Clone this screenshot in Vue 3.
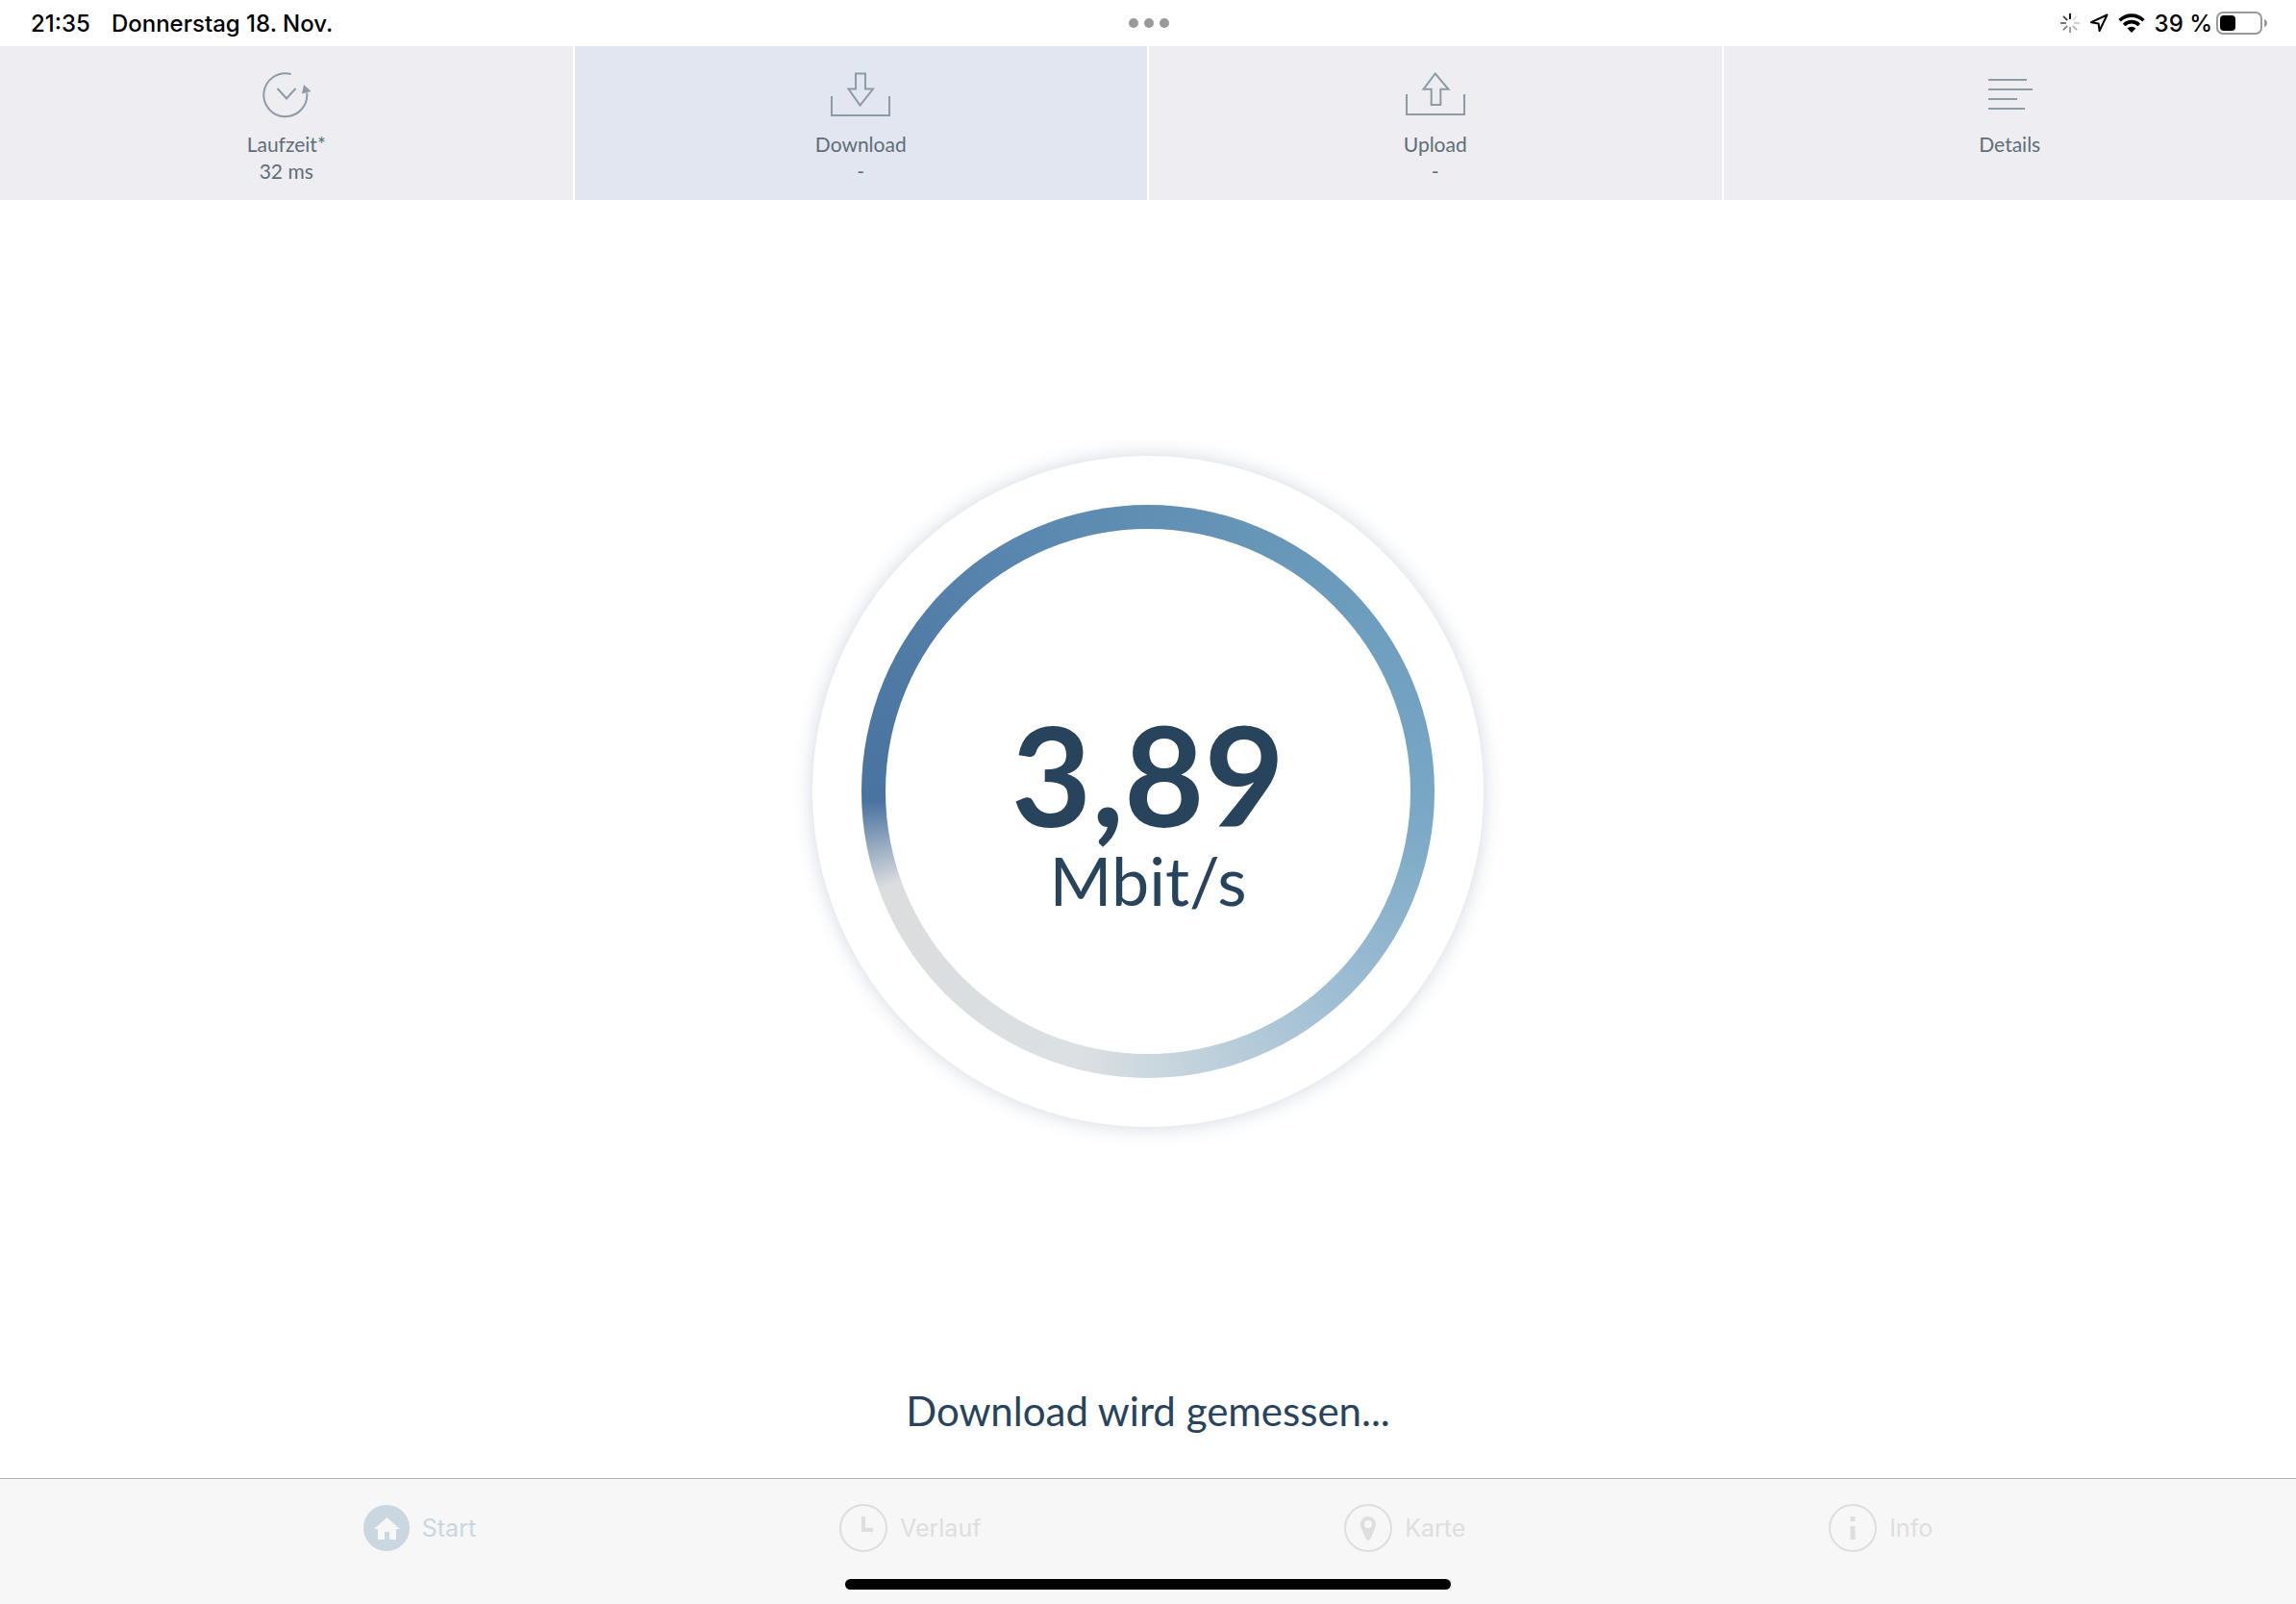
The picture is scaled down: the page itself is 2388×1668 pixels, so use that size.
<script setup>
import { ref } from 'vue'

const activeTab = ref('download')
const activePage = ref('start')

const tabs = [
  { id: 'laufzeit', label: 'Laufzeit*', value: '32 ms' },
  { id: 'download', label: 'Download', value: '-' },
  { id: 'upload', label: 'Upload', value: '-' },
  { id: 'details', label: 'Details', value: '' }
]

const pages = [
  { id: 'start', label: 'Start' },
  { id: 'verlauf', label: 'Verlauf' },
  { id: 'karte', label: 'Karte' },
  { id: 'info', label: 'Info' }
]

// opacity of each spinner spoke, clockwise from the top
const spokes = [1, 0.12, 0.2, 0.3, 0.4, 0.5, 0.6, 0.75]

const speed = ref('3,89')
const unit = 'Mbit/s'
const battery = ref(39)
</script>

<template>
  <div class="app">
    <header class="status-bar">
      <div class="status-left">
        <span>21:35</span>
        <span>Donnerstag 18. Nov.</span>
      </div>
      <div class="dots"><i></i><i></i><i></i></div>
      <div class="status-right">
        <svg class="spinner" width="20" height="20" viewBox="0 0 20 20">
          <line
            v-for="(opacity, i) in spokes"
            :key="i"
            x1="10"
            y1="0"
            x2="10"
            y2="6"
            stroke="#000"
            stroke-width="1.8"
            :opacity="opacity"
            :transform="`rotate(${i * 45} 10 10)`"
          />
        </svg>
        <svg class="location" width="20" height="20" viewBox="0 0 20 20">
          <path
            d="M18.500 1.500L2 9.200L9.600 10.400L10.600 18Z"
            fill="none"
            stroke="#000"
            stroke-width="2"
            stroke-linejoin="round"
          />
        </svg>
        <svg class="wifi" width="28" height="20" viewBox="0 0 28 20">
          <g fill="none" stroke="#000" stroke-width="3.6">
            <path d="M1.6 7.2A17.6 17.6 0 0 1 26.4 7.2" />
            <path d="M6.2 11.9A11 11 0 0 1 21.8 11.9" />
          </g>
          <path d="M14 20L9.6 15.6A6.2 6.2 0 0 1 18.4 15.6Z" />
        </svg>
        <div class="battery">
          <span>{{ battery }} %</span>
          <div class="battery-body">
            <div class="battery-level" :style="{ width: battery + '%' }"></div>
          </div>
          <svg width="3" height="8" viewBox="0 0 3 8"><path d="M0 0Q3 1 3 4T0 8Z" fill="#999" /></svg>
        </div>
      </div>
    </header>

    <nav class="tabs">
      <button
        v-for="tab in tabs"
        :key="tab.id"
        type="button"
        class="tab"
        :class="{ active: tab.id === activeTab }"
        @click="activeTab = tab.id"
      >
        <svg class="tab-icon" width="64" height="48" viewBox="0 0 64 48">
          <template v-if="tab.id === 'laufzeit'">
            <path d="M36.6 2A22.5 22.5 0 1 0 53.2 21.5" />
            <path d="M22.5 17L32 27.5L41.5 17" />
            <path class="solid" d="M50 13L57.5 20L48 22.5Z" />
          </template>
          <template v-else-if="tab.id === 'download'">
            <path d="M2 25V45H62V25" />
            <path d="M27 1.5H37V17.5H45L31.5 34.5L19.5 17.5H27Z" />
          </template>
          <template v-else-if="tab.id === 'upload'">
            <path d="M2 23V44H62V23" />
            <path d="M31.7 1.5L19.5 17.8H27.7V34H37.3V17.8H45.5Z" />
          </template>
          <path v-else d="M10 8H50M10 18H56M10 28H40M10 38H48" />
        </svg>
        <span>{{ tab.label }}</span>
        <span>{{ tab.value }}</span>
      </button>
    </nav>

    <main class="content">
      <div class="disc">
        <div class="ring">
          <div class="reading">
            <span class="speed">{{ speed }}</span>
            <span class="unit">{{ unit }}</span>
          </div>
        </div>
      </div>
      <p class="message">Download wird gemessen...</p>
    </main>

    <footer class="bottom">
      <nav class="pages">
        <a
          v-for="page in pages"
          :key="page.id"
          href="#"
          class="page"
          :class="{ active: page.id === activePage }"
          @click.prevent="activePage = page.id"
        >
          <svg v-if="page.id === 'start'" width="48" height="48" viewBox="0 0 48 48">
            <circle cx="24" cy="24" r="24" fill="currentColor" />
            <path d="M24.5 13L38 25H34V36H27V28H22V36H15V25H11Z" fill="#f7f7f7" />
          </svg>
          <svg v-else width="50" height="50" viewBox="0 0 50 50">
            <circle cx="25" cy="25" r="24" fill="none" stroke="currentColor" stroke-width="2" />
            <path v-if="page.id === 'verlauf'" d="M23 13H27V25H35V29H23Z" fill="currentColor" />
            <path
              v-else-if="page.id === 'karte'"
              fill="currentColor"
              fill-rule="evenodd"
              d="M25 13C20.5 13 17 16.5 17 21C17 25 20 30 23 36.5Q25 39 27 36.5C30 30 33 25 33 21C33 16.5 29.5 13 25 13ZM25 17A4 4 0 1 1 25 25A4 4 0 1 1 25 17Z"
            />
            <path v-else d="M22.5 13H27.5V18H22.5ZM22.5 23H27.5V37H22.5Z" fill="currentColor" />
          </svg>
          <span>{{ page.label }}</span>
        </a>
      </nav>
      <div class="home-indicator"></div>
    </footer>
  </div>
</template>

<style>
body {
  margin: 0;
  background: #fff;
}
</style>

<style scoped>
.app {
  display: flex;
  flex-direction: column;
  min-height: 100vh;
  font-family: Lato, 'Open Sans', sans-serif;
  color: #28435c;
}

.status-bar {
  display: grid;
  grid-template-columns: 1fr auto 1fr;
  align-items: center;
  height: 48px;
  padding: 0 30px 0 32px;
  font-family: Inter, sans-serif;
  font-size: 24px;
  font-weight: 500;
  color: #000;
}

.status-left {
  display: flex;
  gap: 22px;
}

.dots {
  display: flex;
  gap: 6px;
}

.dots i {
  width: 10px;
  height: 10px;
  border-radius: 50%;
  background: #999;
}

.status-right {
  display: flex;
  align-items: center;
  justify-content: flex-end;
  gap: 10px;
}

.battery {
  display: flex;
  align-items: center;
  gap: 2px;
}

.battery-body {
  box-sizing: border-box;
  width: 48px;
  height: 24px;
  margin-left: 2px;
  padding: 2px;
  border: 2px solid #999;
  border-radius: 7px;
}

.battery-level {
  height: 16px;
  border-radius: 4px;
  background: #000;
}

.tabs {
  display: grid;
  grid-template-columns: repeat(4, 1fr);
  gap: 2px;
  height: 160px;
}

.tab {
  display: flex;
  flex-direction: column;
  align-items: center;
  padding: 27px 0 0;
  border: 0;
  background: #eeedf2;
  color: #5f6e76;
  font-family: inherit;
  font-size: 21px;
  line-height: 28px;
  cursor: pointer;
}

.tab.active {
  background: #e2e6f1;
}

.tab-icon {
  margin-bottom: 13px;
  fill: none;
  stroke: #8c9ba4;
  stroke-width: 2;
}

.tab-icon .solid {
  fill: #8c9ba4;
  stroke: none;
}

.content {
  flex: 1;
  display: flex;
  flex-direction: column;
  align-items: center;
  justify-content: space-between;
  padding: 266px 0 42px;
}

.disc {
  padding: 51px;
  border-radius: 50%;
  background: #fff;
  box-shadow: 0 0 20px rgba(40, 67, 112, 0.22);
}

.ring {
  width: 546px;
  height: 546px;
  padding: 25px;
  border-radius: 50%;
  background: conic-gradient(
    #608fb3 0deg,
    #6c9cbc 45deg,
    #78a6c5 90deg,
    #82adc9 105deg,
    #9fbed4 138deg,
    #b6ccd9 160deg,
    #ccd8df 180deg,
    #dde0e2 195deg,
    #dbdee0 225deg,
    #dcdddf 250deg,
    #4973a0 268deg,
    #507ba5 300deg,
    #5986ae 330deg,
    #608fb3 360deg
  );
}

.reading {
  display: flex;
  flex-direction: column;
  align-items: center;
  height: 100%;
  border-radius: 50%;
  background: #fff;
}

.speed {
  margin-top: 180px;
  font-size: 144px;
  font-weight: 700;
  line-height: 150px;
}

.unit {
  font-size: 70px;
  line-height: 70px;
}

.message {
  margin: 0;
  font-size: 42px;
  line-height: 56px;
}

.bottom {
  display: flex;
  flex-direction: column;
  align-items: center;
  justify-content: space-between;
  box-sizing: border-box;
  height: 131px;
  padding: 26px 0 15px;
  border-top: 1px solid #b2b2b2;
  background: #f7f7f7;
}

.pages {
  display: flex;
  justify-content: space-evenly;
  width: 100%;
}

.page {
  display: flex;
  align-items: center;
  gap: 13px;
  height: 50px;
  color: #dedede;
  font-family: Inter, sans-serif;
  font-size: 25px;
  text-decoration: none;
}

.page.active {
  color: #cad6e0;
}

.home-indicator {
  width: 630px;
  height: 11px;
  border-radius: 6px;
  background: #000;
}
</style>
